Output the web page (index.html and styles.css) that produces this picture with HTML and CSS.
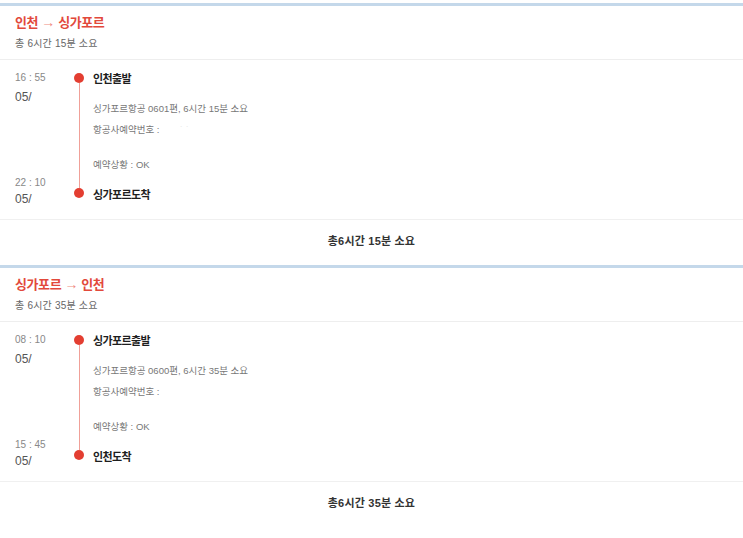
FILE: index.html
```html
<!DOCTYPE html>
<html lang="ko">
<head>
    <meta charset="UTF-8">
    <meta name="viewport" content="width=device-width, initial-scale=1.0">
    <title>항공 일정</title>
    <link rel="stylesheet" href="styles.css">
</head>
<body>
    <div class="trip-card">
        <div class="trip-header">
            <h3 class="trip-title">인천 <span class="arrow">→</span> 싱가포르</h3>
            <p class="trip-summary">총 6시간 15분 소요</p>
        </div>

        <div class="trip-body">
            <div class="stop stop-departure">
                <div class="stop-time">
                    <span class="clock">16 : 55</span>
                    <span class="date">05/</span>
                </div>
                <div class="rail">
                    <span class="rail-gap"></span>
                    <span class="dot"></span>
                    <span class="line"></span>
                </div>
                <div class="stop-info">
                    <div class="stop-name">인천출발</div>
                    <div class="detail detail-flight">싱가포르항공 0601편, 6시간 15분 소요</div>
                    <div class="detail">항공사예약번호 : <span class="masked">˙ ˙</span></div>
                    <div class="detail detail-status">예약상황 : OK</div>
                </div>
            </div>
            <div class="stop stop-arrival">
                <div class="stop-time">
                    <span class="clock">22 : 10</span>
                    <span class="date">05/</span>
                </div>
                <div class="rail">
                    <span class="line line-in"></span>
                    <span class="dot"></span>
                </div>
                <div class="stop-info">
                    <div class="stop-name">싱가포르도착</div>
                </div>
            </div>
        </div>

        <div class="trip-total">총6시간 15분 소요</div>
    </div>

    <div class="trip-card">
        <div class="trip-header">
            <h3 class="trip-title">싱가포르 <span class="arrow">→</span> 인천</h3>
            <p class="trip-summary">총 6시간 35분 소요</p>
        </div>

        <div class="trip-body">
            <div class="stop stop-departure">
                <div class="stop-time">
                    <span class="clock">08 : 10</span>
                    <span class="date">05/</span>
                </div>
                <div class="rail">
                    <span class="rail-gap"></span>
                    <span class="dot"></span>
                    <span class="line"></span>
                </div>
                <div class="stop-info">
                    <div class="stop-name">싱가포르출발</div>
                    <div class="detail detail-flight">싱가포르항공 0600편, 6시간 35분 소요</div>
                    <div class="detail">항공사예약번호 :</div>
                    <div class="detail detail-status">예약상황 : OK</div>
                </div>
            </div>
            <div class="stop stop-arrival">
                <div class="stop-time">
                    <span class="clock">15 : 45</span>
                    <span class="date">05/</span>
                </div>
                <div class="rail">
                    <span class="line line-in"></span>
                    <span class="dot"></span>
                </div>
                <div class="stop-info">
                    <div class="stop-name">인천도착</div>
                </div>
            </div>
        </div>

        <div class="trip-total">총6시간 35분 소요</div>
    </div>
</body>
</html>
```

FILE: styles.css
```css
body {
    font-family: "Liberation Sans", "Noto Sans CJK KR", sans-serif;
    background-color: #fff;
    color: #222;
    margin: 0;
    padding: 3px 0 0;
}
.trip-card {
    border-top: 3px solid #c4d8ea;
    background-color: #fff;
}
.trip-header {
    padding: 7px 15px 7px;
    border-bottom: 1px solid #eeeeee;
}
.trip-title {
    margin: 0;
    font-size: 13px;
    line-height: 19px;
    font-weight: bold;
    letter-spacing: -0.4px;
    color: #e2493b;
}
.trip-title .arrow {
    font-weight: normal;
    font-size: 14px;
    color: #ef8a80;
}
.trip-summary {
    margin: 4px 0 0;
    font-size: 10px;
    line-height: 16px;
    letter-spacing: 0.2px;
    color: #666;
}
.trip-body {
    padding: 10px 0 12px 15px;
    border-bottom: 1px solid #f0f0f0;
}
.stop {
    display: flex;
}
.stop-time {
    width: 54px;
    display: flex;
    flex-direction: column;
}
.clock {
    font-size: 10px;
    line-height: 16px;
    color: #888;
}
.date {
    font-size: 12px;
    color: #555;
}
.stop-departure .date {
    line-height: 22px;
}
.stop-arrival .date {
    line-height: 16px;
}
.rail {
    width: 20px;
    display: flex;
    flex-direction: column;
    align-items: center;
}
.rail-gap {
    height: 3px;
}
.dot {
    width: 10px;
    height: 10px;
    border-radius: 50%;
    background-color: #e33e31;
    flex-shrink: 0;
}
.line {
    width: 1px;
    flex: 1;
    background-color: #f0a098;
}
.line-in {
    flex: none;
    height: 13px;
}
.stop-info {
    padding-left: 4px;
}
.stop-name {
    font-size: 11px;
    line-height: 18px;
    font-weight: bold;
    letter-spacing: -0.6px;
    color: #1e1e1e;
}
.stop-arrival .stop-info {
    padding-top: 11px;
}
.detail {
    font-size: 9.5px;
    line-height: 20px;
    color: #777;
    margin-top: 1px;
}
.detail-flight {
    margin-top: 11px;
}
.detail-status {
    margin-top: 15px;
}
.masked {
    color: #e4e4e4;
    margin-left: 18px;
}
.trip-total {
    padding: 13px 0 16px;
    text-align: center;
    font-size: 11px;
    line-height: 16px;
    font-weight: bold;
    letter-spacing: 0.2px;
    color: #333;
}
```
